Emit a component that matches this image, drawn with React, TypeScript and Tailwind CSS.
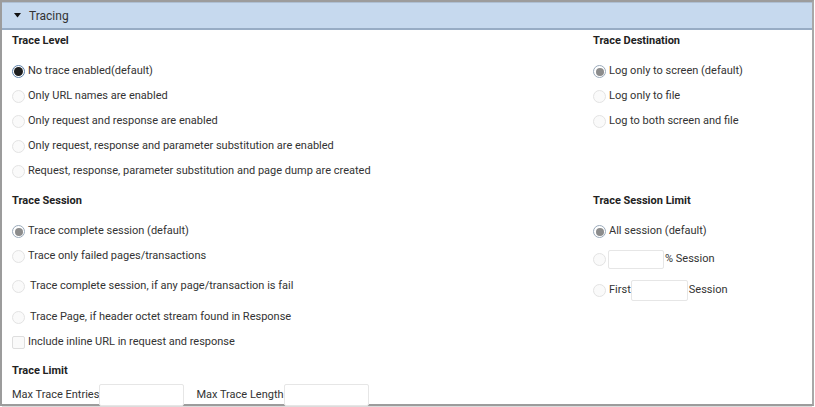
import React from "react";

type RadioKind = "on" | "onMuted" | "off";

function Radio({ kind }: { kind: RadioKind }) {
  if (kind === "on") {
    return (
      <span className="flex h-[13px] w-[13px] shrink-0 items-center justify-center rounded-full border border-[#5b7fa8] bg-white">
        <span className="h-[9px] w-[9px] rounded-full bg-[#1e1e1e]" />
      </span>
    );
  }
  if (kind === "onMuted") {
    return (
      <span className="flex h-[13px] w-[13px] shrink-0 items-center justify-center rounded-full border border-[#9aaabb] bg-white">
        <span className="h-[8px] w-[8px] rounded-full bg-[#8c8c8c]" />
      </span>
    );
  }
  return <span className="h-[13px] w-[13px] shrink-0 rounded-full border border-[#e3e3e3] bg-[#fafafa]" />;
}

function Option({ kind, label, h = "h-[25px]", pad = false }: { kind: RadioKind; label: string; h?: string; pad?: boolean }) {
  return (
    <div className={`flex items-center ${h}`}>
      <Radio kind={kind} />
      <span className={pad ? "ml-[5px]" : "ml-[3px]"}>{label}</span>
    </div>
  );
}

function Heading({ children }: { children: React.ReactNode }) {
  return <div className="flex h-[22px] items-center font-bold text-[#222]">{children}</div>;
}

function Field({ w }: { w: string }) {
  return <span className={`block h-[19px] rounded-[2px] border border-[#e6e6e6] bg-white ${w}`} />;
}

export default function App() {
  return (
    <div
      className="h-[407px] w-[815px] overflow-hidden bg-white text-[11px] text-[#333]"
      style={{ fontFamily: "Roboto, 'Liberation Sans', sans-serif" }}
    >
      <div className="flex h-[406px] w-[814px] flex-col border-2 border-[#9c9c9c] border-r-[#a8a8a8]">
        <div className="flex h-[28px] shrink-0 items-center border-b-2 border-[#97acc4] border-t border-t-[#aebfd2] bg-[#c6d9ee] pl-[12px] text-[12px] text-[#333]">
          <svg width="7" height="5" viewBox="0 0 7 5" className="mr-[8px]">
            <path d="M0 0H7L3.5 4.5Z" fill="#111" />
          </svg>
          Tracing
        </div>

        <div className="flex-1 border-b border-[#dcdcdc] pl-[10px]">
          <div className="grid grid-cols-[581px_1fr]">
            <div>
              <Heading>Trace Level</Heading>
              <div className="mt-[7px]">
                <Option kind="on" label="No trace enabled(default)" />
                <Option kind="off" label="Only URL names are enabled" />
                <Option kind="off" label="Only request and response are enabled" />
                <Option kind="off" label="Only request, response and parameter substitution are enabled" />
                <Option kind="off" label="Request, response, parameter substitution and page dump are created" />
              </div>
            </div>
            <div>
              <Heading>Trace Destination</Heading>
              <div className="mt-[7px]">
                <Option kind="onMuted" label="Log only to screen (default)" />
                <Option kind="off" label="Log only to file" />
                <Option kind="off" label="Log to both screen and file" />
              </div>
            </div>
          </div>

          <div className="mt-[6px] grid grid-cols-[581px_1fr]">
            <div>
              <Heading>Trace Session</Heading>
              <div className="mt-[7px]">
                <Option kind="onMuted" label="Trace complete session (default)" />
                <Option kind="off" label="Trace only failed pages/transactions" />
                <Option kind="off" label="Trace complete session, if any page/transaction is fail" h="h-[25px] mt-[5px]" pad />
                <Option kind="off" label="Trace Page, if header octet stream found in Response" h="h-[25px] mt-[6px]" pad />
                <div className="flex h-[25px] items-center">
                  <span className="h-[13px] w-[13px] shrink-0 rounded-[2px] border border-[#dedede] bg-[#fafafa]" />
                  <span className="ml-[3px]">Include inline URL in request and response</span>
                </div>
              </div>
            </div>
            <div>
              <Heading>Trace Session Limit</Heading>
              <div className="mt-[7px]">
                <Option kind="onMuted" label="All session (default)" />
                <div className="mt-[3px] flex h-[24px] items-center">
                  <Radio kind="off" />
                  <span className="ml-[2px]">
                    <Field w="w-[56px]" />
                  </span>
                  <span className="ml-[1px]">% Session</span>
                </div>
                <div className="mt-[7px] flex h-[24px] items-center">
                  <Radio kind="off" />
                  <span className="ml-[3px]">First</span>
                  <span>
                    <Field w="w-[57px] h-[21px]" />
                  </span>
                  <span className="ml-[1px]">Session</span>
                </div>
              </div>
            </div>
          </div>

          <div className="mt-[5px]">
            <Heading>Trace Limit</Heading>
            <div className="mt-[2px] flex items-center">
              <span>Max Trace Entries</span>
              <Field w="w-[85px] h-[22px]" />
              <span className="ml-[12px]">Max Trace Length</span>
              <Field w="w-[85px] h-[22px]" />
            </div>
          </div>
        </div>
      </div>
    </div>
  );
}
